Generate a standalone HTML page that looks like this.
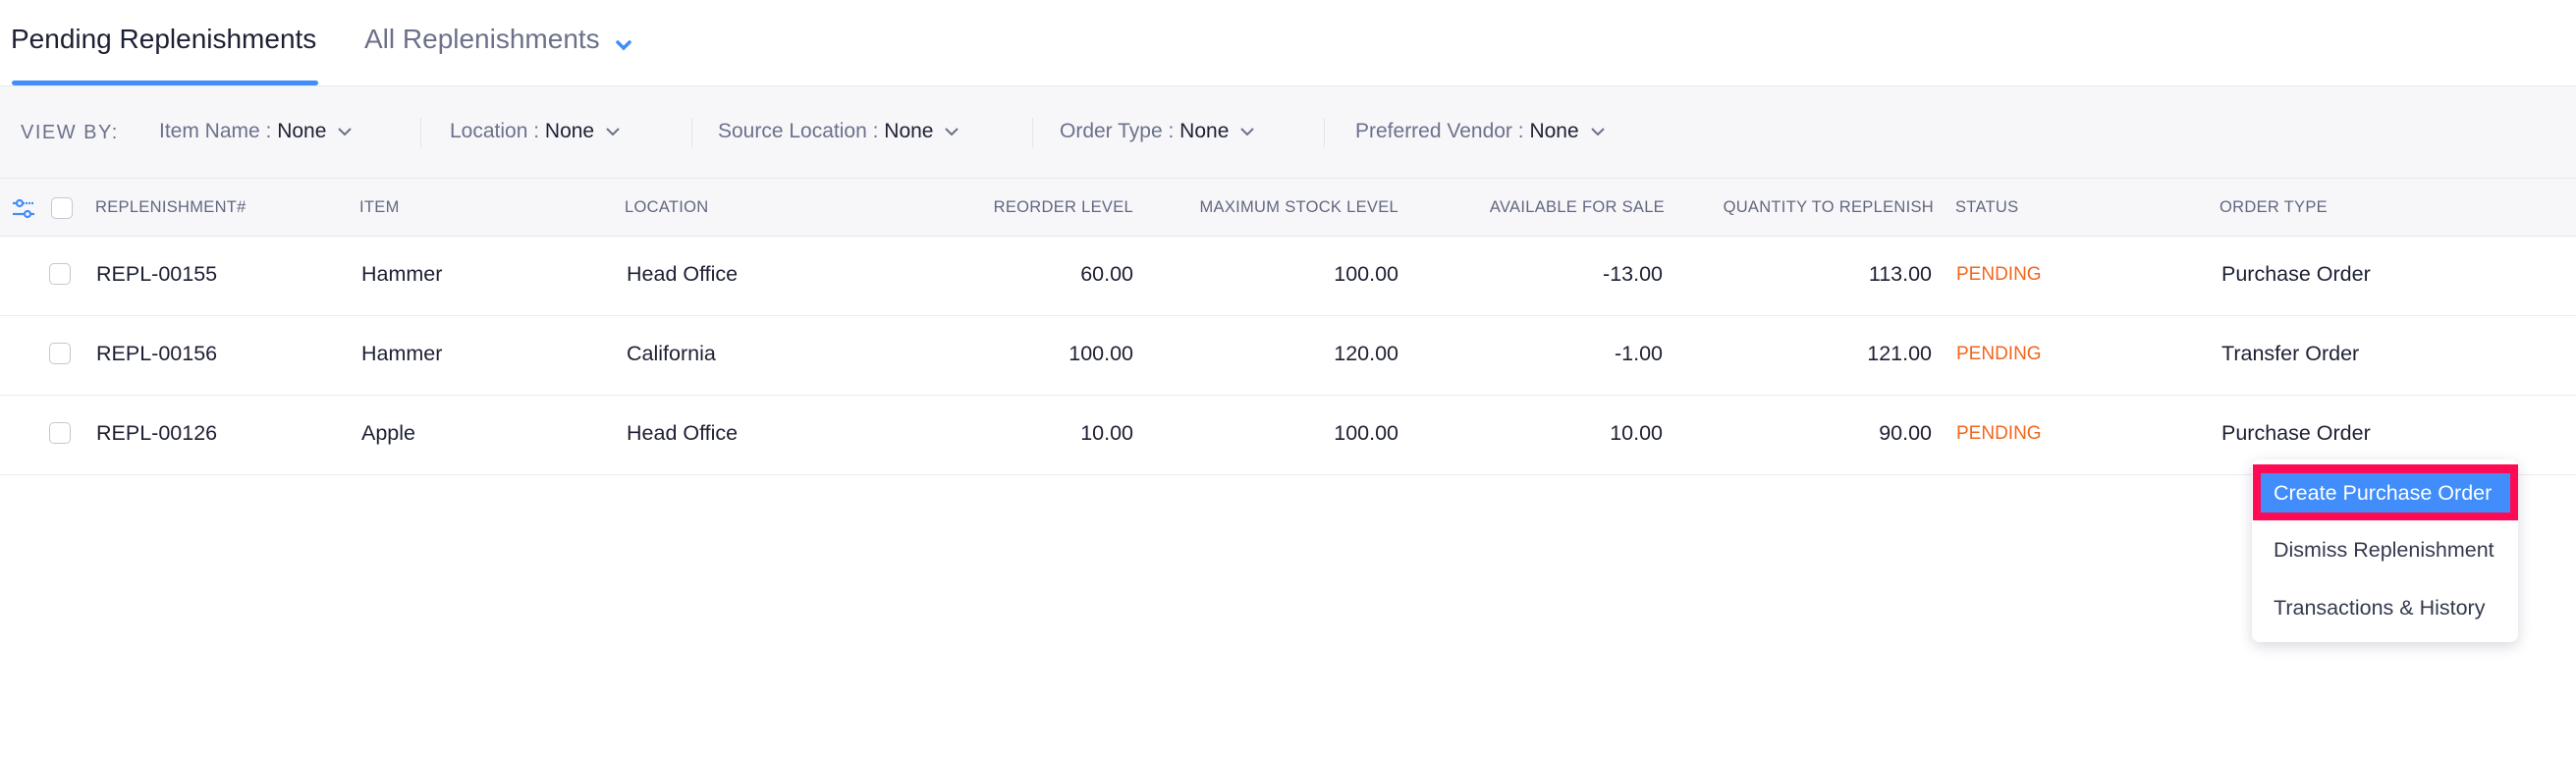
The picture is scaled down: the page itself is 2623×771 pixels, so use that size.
<!DOCTYPE html>
<html><head><meta charset="utf-8"><style>
*{margin:0;padding:0;box-sizing:border-box}
body{width:2623px;height:771px;background:#fff;font-family:"Liberation Sans",Arial,sans-serif;position:relative;overflow:hidden;color:#1d2033}
.a{position:absolute;white-space:nowrap}
.tab{font-size:28px;top:24px}
.fb{position:absolute;left:0;top:87px;width:2623px;height:95px;background:#f7f7fa;border-top:1.5px solid #e6e7ec;border-bottom:1.5px solid #e6e7ec}
.f{font-size:21px;color:#6c718a;top:122px}
.f b{font-weight:normal;color:#1d2033}
.f svg{margin-left:12px;vertical-align:middle}
.sep{position:absolute;top:120px;width:1px;height:30px;background:#e4e5ea}
.th{position:absolute;left:0;top:182px;width:2623px;height:59px;background:#f7f7fa;border-bottom:1.5px solid #e6e7ec}
.h{font-size:16.5px;color:#62677f;top:202px;letter-spacing:0.3px}
.r{font-size:21.5px;top:0}
.row{position:absolute;left:0;width:2623px;height:81px;border-bottom:1.5px solid #ececf0}
.row .a{top:26px}
.cb{position:absolute;width:22px;height:22px;border:1.5px solid #c5c7d0;border-radius:5px;background:#fff}
.rt{text-align:right}
.st{color:#f2661d;font-size:19px}
</style></head><body>
<div class="a tab" style="left:11px;color:#1d2033">Pending Replenishments</div>
<div class="a tab" style="left:371px;color:#6c718a">All Replenishments</div>
<svg class="a" style="left:626px;top:40px" width="18" height="12" viewBox="0 0 18 12"><path d="M3 3 L9 9 L15 3" stroke="#408dfb" stroke-width="3.5" fill="none" stroke-linecap="round"/></svg>
<div class="a" style="left:12px;top:82px;width:312px;height:5px;background:#408dfb;border-radius:3px"></div>

<div class="fb"></div>
<div class="a f" style="left:21px;letter-spacing:1.5px;font-size:20px;top:124px">VIEW BY:</div>
<div class="a f" style="left:162px">Item Name : <b>None</b><svg width="14" height="9" viewBox="0 0 14 9"><path d="M1 1 L7 7 L13 1" stroke="#6c718a" stroke-width="2" fill="none"/></svg></div>
<div class="sep" style="left:428px"></div>
<div class="a f" style="left:458px">Location : <b>None</b><svg width="14" height="9" viewBox="0 0 14 9"><path d="M1 1 L7 7 L13 1" stroke="#6c718a" stroke-width="2" fill="none"/></svg></div>
<div class="sep" style="left:704px"></div>
<div class="a f" style="left:731px">Source Location : <b>None</b><svg width="14" height="9" viewBox="0 0 14 9"><path d="M1 1 L7 7 L13 1" stroke="#6c718a" stroke-width="2" fill="none"/></svg></div>
<div class="sep" style="left:1051px"></div>
<div class="a f" style="left:1079px">Order Type : <b>None</b><svg width="14" height="9" viewBox="0 0 14 9"><path d="M1 1 L7 7 L13 1" stroke="#6c718a" stroke-width="2" fill="none"/></svg></div>
<div class="sep" style="left:1348px"></div>
<div class="a f" style="left:1380px">Preferred Vendor : <b>None</b><svg width="14" height="9" viewBox="0 0 14 9"><path d="M1 1 L7 7 L13 1" stroke="#6c718a" stroke-width="2" fill="none"/></svg></div>

<div class="th"></div>
<svg class="a" style="left:12px;top:201px" width="24" height="24" viewBox="0 0 24 24"><g stroke="#408dfb" stroke-width="2.2" fill="none"><line x1="1" y1="6" x2="5" y2="6"/><circle cx="8" cy="6" r="3"/><line x1="11" y1="6" x2="23" y2="6" stroke-dasharray="2 1"/><line x1="1" y1="17" x2="12" y2="17"/><circle cx="16" cy="17" r="3"/><line x1="19" y1="17" x2="23" y2="17"/></g></svg>
<div class="cb" style="left:52px;top:201px"></div>
<div class="a h" style="left:97px">REPLENISHMENT#</div>
<div class="a h" style="left:366px">ITEM</div>
<div class="a h" style="left:636px">LOCATION</div>
<div class="a h rt" style="right:1469px">REORDER LEVEL</div>
<div class="a h rt" style="right:1199px">MAXIMUM STOCK LEVEL</div>
<div class="a h rt" style="right:928px">AVAILABLE FOR SALE</div>
<div class="a h rt" style="right:654px">QUANTITY TO REPLENISH</div>
<div class="a h" style="left:1991px">STATUS</div>
<div class="a h" style="left:2260px">ORDER TYPE</div>

<div class="row" style="top:241px">
<div class="cb" style="left:50px;top:27px"></div>
<div class="a r" style="left:98px">REPL-00155</div><div class="a r" style="left:368px">Hammer</div><div class="a r" style="left:638px">Head Office</div>
<div class="a r rt" style="right:1469px">60.00</div><div class="a r rt" style="right:1199px">100.00</div><div class="a r rt" style="right:930px">-13.00</div><div class="a r rt" style="right:656px">113.00</div>
<div class="a st" style="left:1992px;top:28px">PENDING</div><div class="a r" style="left:2262px">Purchase Order</div></div>

<div class="row" style="top:322px">
<div class="cb" style="left:50px;top:27px"></div>
<div class="a r" style="left:98px">REPL-00156</div><div class="a r" style="left:368px">Hammer</div><div class="a r" style="left:638px">California</div>
<div class="a r rt" style="right:1469px">100.00</div><div class="a r rt" style="right:1199px">120.00</div><div class="a r rt" style="right:930px">-1.00</div><div class="a r rt" style="right:656px">121.00</div>
<div class="a st" style="left:1992px;top:28px">PENDING</div><div class="a r" style="left:2262px">Transfer Order</div></div>

<div class="row" style="top:403px">
<div class="cb" style="left:50px;top:27px"></div>
<div class="a r" style="left:98px">REPL-00126</div><div class="a r" style="left:368px">Apple</div><div class="a r" style="left:638px">Head Office</div>
<div class="a r rt" style="right:1469px">10.00</div><div class="a r rt" style="right:1199px">100.00</div><div class="a r rt" style="right:930px">10.00</div><div class="a r rt" style="right:656px">90.00</div>
<div class="a st" style="left:1992px;top:28px">PENDING</div><div class="a r" style="left:2262px">Purchase Order</div></div>

<div class="a" style="left:2293px;top:468px;width:271px;height:186px;background:#fff;border-radius:8px;box-shadow:0 4px 14px rgba(40,40,80,0.18)"></div>
<div class="a" style="left:2294px;top:473px;width:270px;height:57px;background:#ff0a54"></div>
<div class="a" style="left:2302px;top:482px;width:254px;height:40px;background:#408dfb;color:#fff;font-size:21.5px;padding:8px 0 0 13px">Create Purchase Order</div>
<div class="a" style="left:2315px;top:548px;font-size:21.5px;color:#343a4d">Dismiss Replenishment</div>
<div class="a" style="left:2315px;top:607px;font-size:21.5px;color:#343a4d">Transactions &amp; History</div>
</body></html>
